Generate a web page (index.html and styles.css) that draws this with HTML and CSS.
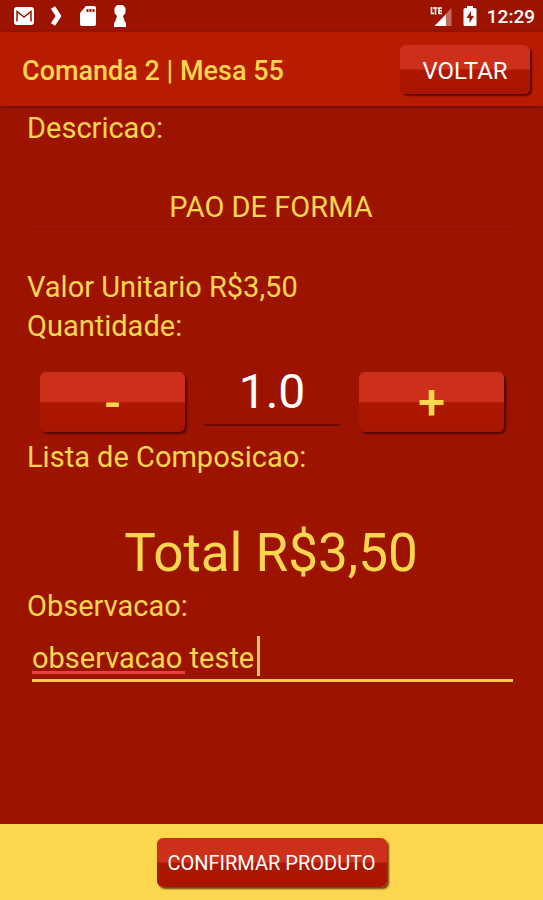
FILE: index.html
```html
<!DOCTYPE html>
<html lang="pt-BR">
<head>
  <meta charset="UTF-8" />
  <meta name="viewport" content="width=device-width, initial-scale=1.0"/>
  <title>Comanda 2 | Mesa 55</title>
  <link rel="stylesheet" href="styles.css">
</head>
<body>
  <div class="status-bar">
    <div class="status-icons">
      <svg width="20" height="18" viewBox="0 0 20 18"><rect width="20" height="18" rx="3" fill="#fff"/><path d="M3 14.500V4.500L10 10l7-5.500v10" fill="none" stroke="#9c1400" stroke-width="1.500"/></svg>
      <svg width="12" height="20" viewBox="0 0 12 20"><path d="M2 1.500L7.500 10l-5.500 8.500" fill="none" stroke="#fff" stroke-width="5"/></svg>
      <svg width="16" height="20" viewBox="0 0 16 20"><path d="M6 0h8a2 2 0 0 1 2 2v16a2 2 0 0 1-2 2H2a2 2 0 0 1-2-2V7z" fill="#fff"/><path d="M7.500 3v3M10.500 3v3M13.500 3v3" stroke="#9c1400" stroke-width="2"/></svg>
      <svg width="14" height="22" viewBox="0 0 14 22"><path d="M4 0h6l2.500 3v5L10 11l2 6 1 1v4H1v-4l1-1 2-6-2.500-3V3z" fill="#fff"/></svg>
    </div>
    <div class="status-info">
      <svg width="24" height="21" viewBox="0 0 24 21"><path d="M22.500 2v18H5.500z" fill="#c56a5e"/><path d="M17 8.500V20H5.500z" fill="#fff"/><path d="M2.500 1v6.500h2.500M4 2h4.500M6.500 2v6.500M13 2h-3v5.500h3M10 4.700h3" fill="none" stroke="#fff" stroke-width="1.600"/></svg>
      <svg width="14" height="20" viewBox="0 0 14 20"><path d="M4 0h6v2h2q1.500 0 1.500 1.500v15Q13.500 20 12 20H2Q.5 20 .5 18.500v-15Q.5 2 2 2h2z" fill="#fff"/><path d="M8 5l-4.500 7H6.500v5l4.500-7H8z" fill="#9c1400"/></svg>
      <span class="clock">12:29</span>
    </div>
  </div>

  <header class="toolbar">
    <h1>Comanda 2 | Mesa 55</h1>
    <button type="button" class="btn btn-back">VOLTAR</button>
  </header>

  <main class="form-container">
    <label for="desc">Descricao:</label>
    <input type="text" id="desc" class="product" value="PAO DE FORMA" readonly />

    <p>Valor Unitario R$3,50</p>
    <label for="qty">Quantidade:</label>
    <div class="quantity">
      <button type="button" class="btn btn-step" onclick="changeQty(-1)">-</button>
      <input type="text" id="qty" value="1.0" />
      <button type="button" class="btn btn-step" onclick="changeQty(1)">+</button>
    </div>

    <p>Lista de Composicao:</p>
    <p class="total">Total R$<span id="total">3,50</span></p>

    <label for="obs">Observacao:</label>
    <div class="note">
      <input type="text" id="obs" value="observacao teste" spellcheck="false" />
      <span class="spelling"></span>
      <span class="caret"></span>
    </div>
  </main>

  <footer class="actions">
    <button type="button" class="btn btn-confirm">CONFIRMAR PRODUTO</button>
  </footer>

  <script>
    function changeQty(step) {
      const qty = document.getElementById("qty");
      const value = Math.max(1, parseFloat(qty.value) + step);
      qty.value = value.toFixed(1);
      document.getElementById("total").textContent = (value * 3.5).toFixed(2).replace(".", ",");
    }
  </script>
</body>
</html>
```
FILE: styles.css
```css
* {
  box-sizing: border-box;
}

body {
  font-family: Roboto, sans-serif;
  font-size: 29px;
  line-height: 39px;
  background-color: #9c1400;
  color: #fdd64f;
  display: flex;
  flex-direction: column;
  margin: 0;
  min-height: 100vh;
}

p {
  margin: 0;
}

label {
  display: block;
}

input {
  display: block;
  width: 100%;
  padding: 0;
  border: none;
  border-radius: 0;
  outline: none;
  background: transparent;
  color: inherit;
  font: inherit;
}

.status-bar {
  display: flex;
  justify-content: space-between;
  align-items: center;
  height: 32px;
  padding: 0 8px 0 14px;
}

.status-icons,
.status-info {
  display: flex;
  align-items: center;
}

.status-icons {
  gap: 17px;
}

.status-info {
  gap: 10px;
}

.clock {
  color: #fff;
  font-size: 19px;
  font-weight: 500;
}

.toolbar {
  display: flex;
  justify-content: space-between;
  align-items: center;
  height: 74px;
  padding: 0 13px 0 22px;
  background-color: #b81c00;
  box-shadow: 0 1px 3px rgba(60, 0, 0, 0.7);
}

h1 {
  margin: 0;
  padding-top: 4px;
  font-size: 27px;
  font-weight: 500;
}

.btn {
  padding: 0;
  border: none;
  border-radius: 6px;
  background: linear-gradient(#cb2f1a, #cd301b 49%, #ac1800 51%, #a81500);
  box-shadow: 2px 2px 2px rgba(50, 0, 0, 0.7);
  color: #fff;
  font-family: inherit;
  cursor: pointer;
}

.btn-back {
  width: 130px;
  height: 49px;
  padding-top: 3px;
  font-size: 24px;
}

.form-container {
  flex: 1;
  padding: 3px 28px 2px 27px;
}

.product {
  height: 82px;
  margin-bottom: 38px;
  padding: 39px 0 3px;
  border-bottom: 1px solid #8b1000;
  text-align: center;
}

.quantity {
  display: flex;
  gap: 19px;
  padding: 26px 11px 6px 13px;
}

.quantity input {
  flex: 1;
  min-width: 0;
  height: 54px;
  padding-bottom: 14px;
  border-bottom: 2px solid #6c0800;
  color: #fff;
  font-size: 48px;
  text-align: center;
}

.btn-step {
  width: 145px;
  height: 60px;
  color: #fdd64f;
  font-size: 49px;
  font-weight: 500;
}

.total {
  padding: 43px 0 1px;
  font-size: 53px;
  line-height: 66px;
  text-align: center;
}

.note {
  position: relative;
  margin: 0 2px 0 5px;
}

.note input {
  height: 56px;
  padding: 10px 0 0;
  border-bottom: 3px solid #fdc64f;
}

/* spell check mark under the first word */
.spelling {
  position: absolute;
  left: 0;
  top: 45px;
  width: 153px;
  height: 3px;
  background-color: #e9423a;
}

.caret {
  position: absolute;
  left: 225px;
  top: 10px;
  width: 3px;
  height: 40px;
  background-color: #fdc64f;
}

.actions {
  display: flex;
  justify-content: center;
  padding: 14px 0 13px;
  background-color: #fdd64f;
}

.btn-confirm {
  width: 230px;
  height: 49px;
  font-size: 20px;
}
```
